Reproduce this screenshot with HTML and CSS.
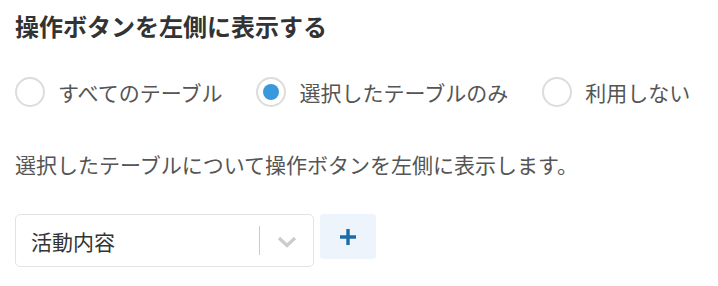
FILE: index.html
```html
<!DOCTYPE html>
<html lang="ja">
<head>
  <meta charset="UTF-8">
  <title>操作ボタンを左側に表示する</title>
  <link rel="stylesheet" href="styles.css">
</head>
<body>
  <div class="setting">
    <h2 class="setting-title">操作ボタンを左側に表示する</h2>

    <!-- 表示対象 -->
    <div class="radio-group">
      <label class="radio"><span class="radio-mark"></span>すべてのテーブル</label>
      <label class="radio checked"><span class="radio-mark"></span>選択したテーブルのみ</label>
      <label class="radio"><span class="radio-mark"></span>利用しない</label>
    </div>

    <p class="description">選択したテーブルについて操作ボタンを左側に表示します。</p>

    <!-- テーブル選択 -->
    <div class="table-row">
      <div class="select">
        <span class="select-value">活動内容</span>
        <span class="select-sep"></span>
        <svg class="select-arrow" width="20" height="12" viewBox="0 0 20 12">
          <path d="M2 2 L10 9.5 L18 2" fill="none" stroke="#cccccc" stroke-width="3.2"/>
        </svg>
      </div>
      <button class="add-button">
        <svg width="18" height="18" viewBox="0 0 18 18">
          <path d="M9 1 V17 M1 9 H17" stroke="#1f6ba6" stroke-width="3.4"/>
        </svg>
      </button>
    </div>
  </div>
</body>
</html>
```

FILE: styles.css
```css
body {
  margin: 0;
  padding: 0;
  font-family: "Noto Sans CJK JP", "Noto Sans", sans-serif;
  color: #555;
  background: #fff;
}
.setting {
  padding: 11px 15px;
}
.setting-title {
  margin: 0;
  font-size: 24px;
  font-weight: bold;
  color: #333;
  line-height: 30px;
}
.radio-group {
  display: flex;
  align-items: center;
  gap: 34px;
  margin-top: 36px;
}
.radio {
  display: flex;
  align-items: center;
  gap: 13px;
  font-size: 21px;
  line-height: 30px;
  color: #555;
  cursor: pointer;
}
.radio-mark {
  width: 30px;
  height: 30px;
  box-sizing: border-box;
  border: 2px solid #dcdcdc;
  border-radius: 50%;
  display: flex;
  align-items: center;
  justify-content: center;
}
.radio.checked .radio-mark::after {
  content: "";
  width: 16px;
  height: 16px;
  border-radius: 50%;
  background: #3a99dc;
}
.description {
  margin: 42px 0 0;
  font-size: 21px;
  line-height: 30px;
  color: #555;
}
.table-row {
  display: flex;
  align-items: flex-start;
  gap: 6px;
  margin-top: 35px;
}
.select {
  width: 299px;
  height: 53px;
  box-sizing: border-box;
  border: 1px solid #e3e3e3;
  border-radius: 5px;
  display: flex;
  align-items: center;
  padding: 0 16px 0 15px;
}
.select-value {
  flex: 1;
  font-size: 21px;
  color: #333;
}
.select-sep {
  width: 1px;
  height: 29px;
  background: #ccc;
  margin-right: 17px;
}
.select-arrow {
  margin-top: 3px;
}
.add-button {
  width: 56px;
  height: 45px;
  border: none;
  border-radius: 3px;
  background: #edf4fb;
  display: flex;
  align-items: center;
  justify-content: center;
  cursor: pointer;
  padding: 0;
}
```
